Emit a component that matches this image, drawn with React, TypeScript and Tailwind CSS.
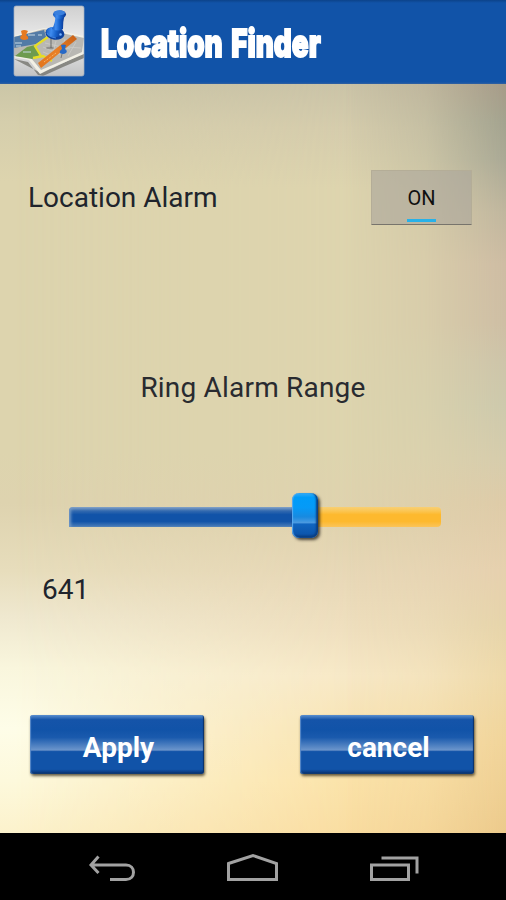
import { useState } from "react";

function MapPinLogo() {
  return (
    <svg viewBox="0 0 72 72" className="size-[72px] shrink-0" aria-hidden="true">
      <defs>
        <linearGradient id="tile" x1="0" y1="0" x2="0" y2="1">
          <stop offset="0" stopColor="#d0d0d0" />
          <stop offset=".5" stopColor="#ececec" />
          <stop offset="1" stopColor="#c2c3c4" />
        </linearGradient>
        <linearGradient id="pin" x1="0" y1="0" x2="1" y2="0">
          <stop offset="0" stopColor="#1a5cc0" />
          <stop offset=".3" stopColor="#3f8cf0" />
          <stop offset=".6" stopColor="#1762cb" />
          <stop offset="1" stopColor="#0a3590" />
        </linearGradient>
        <linearGradient id="road" x1="1" y1="0" x2="0" y2="1">
          <stop offset="0" stopColor="#c95f14" />
          <stop offset=".5" stopColor="#e98028" />
          <stop offset="1" stopColor="#e2741a" />
        </linearGradient>
        <clipPath id="clip"><rect x="1" y="1" width="70" height="70" rx="2" /></clipPath>
      </defs>
      <rect x="1" y="1" width="70" height="70" rx="2" fill="url(#tile)" />
      <g clipPath="url(#clip)">
        <path d="M1 54 15 57 25 70 30 71 50 62 71 53V48L40 63 26 67Z" fill="#6f6f68" opacity=".75" />
        <path d="M0 31 31 23 71 31V49L43 61 27 69 23 64 16 55 0 52Z" fill="#f2f0e5" />
        <path d="M1 32 31 24 71 33 69 47 42 59 28 65 18 53 1 51Z" fill="#b9b8b3" />
        <path d="M1 32 31 25 33 32 23 39 1 43Z" fill="#527ba6" />
        <path d="M2 51 14 42 22 40 27 50 19 54Z" fill="#6e9b4e" />
        <path d="M35 32 22 41 28 51M20 53 30 51 39 56" fill="none" stroke="#e6dd24" strokeWidth="2.300" />
        <path d="M30 42 46 49M32 38 57 44M43 36 38 54M52 34 46 50M63 37 55 51M54 42 68 43M30 47 40 51" fill="none" stroke="#d0cfca" strokeWidth=".7" />
        <path d="M15 30h7M25 30h4M2 38h7M3 41h5M10 47h8" stroke="#c5d9e4" strokeWidth="1.100" />
        <path d="M60 30 64 34 28 63 25 58Z" fill="url(#road)" />
        <path d="m43 48-12 9" stroke="#f9c17c" strokeWidth="1" strokeDasharray="1 1" />
        <path d="M8 26q3-2 7 0l-2 4q3 2 2 4-4 2-7 0-2-2 1-4Z" fill="#e67a20" />
        <path d="M38 34v9" stroke="#777978" strokeWidth="1.200" />
        <ellipse cx="37" cy="43" rx="4" ry="1.200" fill="#555" opacity=".4" />
        <ellipse cx="42" cy="28.500" rx="9.500" ry="6.200" fill="#0d43a0" transform="rotate(8 42 28.500)" />
        <ellipse cx="41.500" cy="27" rx="8.500" ry="5" fill="url(#pin)" transform="rotate(8 41.500 27)" />
        <path d="M42 10h9.500q-1.500 6-1.500 14-4 3-11 0 4-7 3-14Z" fill="url(#pin)" />
        <ellipse cx="46.500" cy="9.500" rx="6.500" ry="4.200" fill="url(#pin)" />
        <ellipse cx="46.500" cy="7.800" rx="5.500" ry="2.400" fill="#397fdd" />
        <path d="M34 28q2 4 9 5" fill="none" stroke="#3d83e2" strokeWidth="1.200" />
        <circle cx="47.500" cy="29.500" r="1.300" fill="#76b4ff" />
        <path d="M48 40q3-1 5 0l-1 4q3 2 1 4-3 2-6 0-1-2 2-4Z" fill="#2769c6" />
        <path d="m49 49-1 4" stroke="#777" />
      </g>
      <rect x="1" y="1" width="70" height="70" rx="2" fill="none" stroke="#a3afc0" strokeWidth=".7" />
    </svg>
  );
}

function SkyBackdrop() {
  return (
    <>
      <div className="[grid-area:1/1] bg-[linear-gradient(180deg,#cbc6a7_0%,#d5ceac_5%,#ddd4ae_13%,#ddd4ae_49%,#ded3af_56%,#e7ddbc_65%,#efe8cf_71%,#f9f6dd_78%,#fefde8_86%,#fdf9dc_93%,#fcf2cc_100%)]" />
      <div className="[grid-area:1/1] bg-[linear-gradient(180deg,#cac3a7_0%,#d5ccac_6%,#ddd4ae_14%,#ddd4ae_49%,#dfd2ae_58%,#e8d8b7_66%,#efdfbe_73%,#f7e8c6_79%,#f8e3b2_86%,#fbe2a8_93%,#f9dca0_100%)] [mask-image:linear-gradient(90deg,transparent_3%,black_70%)]" />
      <div className="[grid-area:1/1] bg-[linear-gradient(180deg,#a69b88_0%,#a3a38f_5%,#aaa995_10%,#c0b69e_17%,#cebca3_24%,#cebea4_32%,#cdc4a9_37%,#cdc9ac_43%,#d6ccac_50%,#decba8_56%,#e6d0ae_65%,#e6d4aa_72%,#eed9a9_79%,#f1d49a_88%,#ecca8c_100%)] [mask-image:linear-gradient(90deg,transparent_68%,rgba(0,0,0,.3)_84%,black_100%)]" />
    </>
  );
}

function GlossyButton({ label }: { label: string }) {
  return (
    <button className="h-[59px] w-[174px] rounded-[3px] bg-[linear-gradient(180deg,#5b8fcf_0%,#1554a9_8%,#1153a8_25%,#1a5aad_38%,#6a94cb_59%,#5684c1_60%,#1153a8_62%,#1153a8_92%,#082f6b_100%)] pl-[3px] pt-[7px] text-[28px] font-bold text-white shadow-[1px_2px_3px_rgba(50,40,20,.75),inset_1px_0_1px_#5a8bc9,inset_-1px_-1px_1px_#0a3168]">
      {label}
    </button>
  );
}

function RangeSlider({ value, onChange }: { value: number; onChange: (next: number) => void }) {
  return (
    <div
      role="slider"
      tabIndex={0}
      aria-valuenow={value}
      aria-valuemin={0}
      aria-valuemax={1000}
      onKeyDown={(e) => {
        if (e.key === "ArrowRight") onChange(Math.min(1000, value + 1));
        if (e.key === "ArrowLeft") onChange(Math.max(0, value - 1));
      }}
      className="ml-[69px] flex h-[46px] w-[372px] items-center outline-none"
    >
      <div
        className="mt-[2px] h-[20px] shrink-0 rounded-tl-[4px] bg-[linear-gradient(180deg,#88a5c8_0%,#3269af_20%,#1153a8_38%,#1153a8_72%,#4d7fb9_100%)] shadow-[inset_3px_0_3px_-1px_#7298c5]"
        style={{ width: value * 0.348 }}
      />
      <div className="z-10 mb-[1px] h-[45px] w-[26px] shrink-0 rounded-[7px] bg-[linear-gradient(180deg,#35acf6_0%,#009cf9_10%,#059af7_32%,#188ae0_53%,#4b9ae0_66%,#1065c0_69%,#0c56ad_91%,#073777_100%)] shadow-[2px_2px_3px_rgba(30,25,20,.75),inset_1px_0_1px_#5aaaf0,inset_-2px_-1px_2px_#0a3e83]" />
      <div className="mt-[2px] h-[20px] flex-1 rounded-r-[4px] bg-[linear-gradient(180deg,#f8cf74_0%,#fbc653_20%,#fdb92e_38%,#fdb92e_72%,#fac45a_100%)]" />
    </div>
  );
}

function NavigationBar() {
  return (
    <nav className="flex h-[67px] items-start justify-between bg-black pl-[88px] pr-[87px] pt-[20px]">
      <svg width="48" height="30" viewBox="0 0 48 30" fill="none" stroke="#a2a2a2" strokeWidth="3">
        <path d="M3 12H38C48 12 48 26.500 38 26.500H22M10.500 3.500 3 12l7.500 8" />
      </svg>
      <svg width="54" height="30" viewBox="0 0 54 30" fill="none" stroke="#a2a2a2" strokeWidth="3">
        <path d="M2.500 10.500 27 2.500l23.500 8v16h-48Z" />
      </svg>
      <svg width="50" height="30" viewBox="0 0 50 30" fill="none" stroke="#a2a2a2" strokeWidth="3">
        <path d="M2.500 12h37v14.500h-37ZM12.500 5H48v15.500" />
      </svg>
    </nav>
  );
}

export default function App() {
  const [alarmOn, setAlarmOn] = useState(true);
  const [range, setRange] = useState(641);

  return (
    <div className="flex h-[900px] w-[506px] flex-col overflow-hidden font-['Roboto','Liberation_Sans',sans-serif]">
      <header className="flex h-[84px] shrink-0 items-start bg-[linear-gradient(180deg,#0c438a_0px,#1153a8_3px,#1153a8_82px,#3261a0_84px)] pl-[13px] pt-[5px]">
        <MapPinLogo />
        <h1 className="ml-[16px] mt-[13px] origin-left scale-x-[.733] whitespace-nowrap font-['Inter','Roboto',sans-serif] text-[38px] font-black leading-[50px] text-white [-webkit-text-stroke:1.8px_white] [word-spacing:4px]">
          Location Finder
        </h1>
      </header>

      <main className="grid h-[749px] shrink-0">
        <SkyBackdrop />
        <div className="z-10 flex flex-col [grid-area:1/1]">
          <div className="mt-[86px] flex h-[55px] items-center justify-between pl-[28px] pr-[34px] text-[28px] text-[#20242c]">
            <span>Location Alarm</span>
            <button
              onClick={() => setAlarmOn(!alarmOn)}
              className="flex h-[55px] w-[101px] flex-col items-center rounded-[1px] border border-[#b4ad97] border-b-[#77746c] bg-[#aaa59b]/60 pt-[13px] text-[20px] leading-[28px] text-[#101010]"
            >
              {alarmOn ? "ON" : "OFF"}
              <span className="mt-[7px] h-[3px] w-[29px] shrink-0 bg-[#27b1e8]" />
            </button>
          </div>

          <h2 className="mt-[145px] text-center text-[28px] leading-[36px] tracking-[.2px] text-[#292b30]">
            Ring Alarm Range
          </h2>

          <div className="mt-[87px]">
            <RangeSlider value={range} onChange={setRange} />
          </div>
          <p className="ml-[42px] mt-[34px] text-[28px] leading-[34px] text-[#20242c]">{range}</p>

          <div className="mt-[108px] flex justify-between pl-[30px] pr-[32px]">
            <GlossyButton label="Apply" />
            <GlossyButton label="cancel" />
          </div>
        </div>
      </main>
      <NavigationBar />
    </div>
  );
}
